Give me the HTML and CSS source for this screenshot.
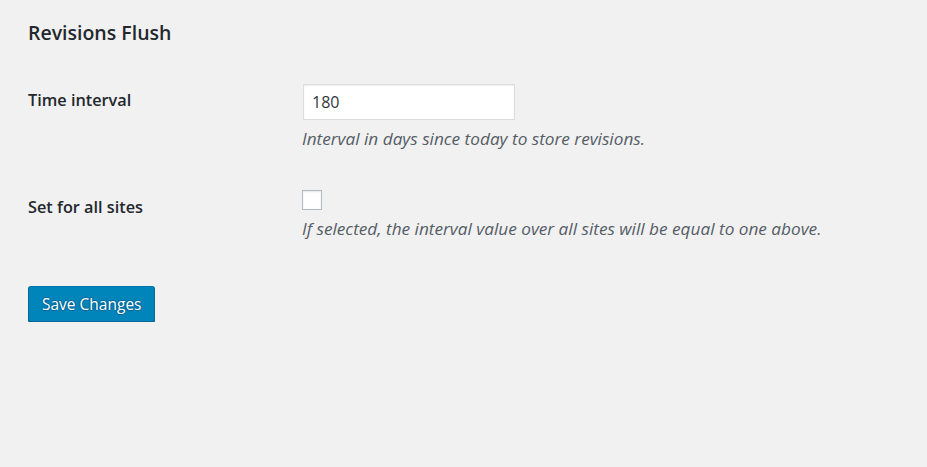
FILE: index.html
```html
<!DOCTYPE html>
<html>
<head>
<meta charset="utf-8">
<link rel="stylesheet" href="styles.css">
</head>
<body>
<div class="wrap">
  <h1 class="title">Revisions Flush</h1>
  <form class="form">
    <div class="row">
      <label class="label" for="interval">Time interval</label>
      <div class="field">
        <input class="text" id="interval" type="text" value="180">
        <p class="desc">Interval in days since today to store revisions.</p>
      </div>
    </div>
    <div class="row row-check">
      <label class="label" for="all">Set for all sites</label>
      <div class="field">
        <input class="check" id="all" type="checkbox">
        <p class="desc desc-check">If selected, the interval value over all sites will be equal to one above.</p>
      </div>
    </div>
    <div class="submit">
      <button class="button" type="button">Save Changes</button>
    </div>
  </form>
</div>
</body>
</html>
```

FILE: styles.css
```css
html, body {
  margin: 0;
  padding: 0;
  background: #f1f1f1;
  color: #23282d;
  font-family: "Open Sans", "Noto Sans", sans-serif;
  font-size: 14px;
}
.wrap {
  padding: 19px 0 0 28px;
}
.title {
  margin: 0;
  font-size: 19.5px;
  font-weight: 600;
  line-height: 27px;
  color: #23282d;
}
.form {
  margin-top: 38px;
}
.row {
  display: grid;
  grid-template-columns: 274px 1fr;
}
.label {
  font-weight: 600;
  font-size: 16.3px;
  line-height: 22px;
  padding-top: 5px;
}
.field {
  display: flex;
  flex-direction: column;
  align-items: flex-start;
}
.text {
  box-sizing: border-box;
  width: 212px;
  height: 36px;
  margin: 0 0 0 1px;
  padding: 0 8px;
  border: 1px solid #ddd;
  background: #fff;
  box-shadow: inset 0 1px 2px rgba(0,0,0,0.07);
  font-family: "Open Sans", "Noto Sans", sans-serif;
  font-size: 16px;
  color: #32373c;
  outline: none;
}
.desc {
  margin: 7px 0 0;
  font-style: italic;
  font-size: 17.2px;
  line-height: 24px;
  color: #555d66;
}
.row-check {
  margin-top: 39px;
}
.row-check .label {
  padding-top: 6px;
}
.check {
  -webkit-appearance: none;
  appearance: none;
  box-sizing: border-box;
  width: 20px;
  height: 20px;
  margin: 0;
  border: 1px solid #b4b9be;
  background: #fff;
  box-shadow: inset 0 1px 2px rgba(0,0,0,0.1);
}
.desc-check {
  margin-top: 7px;
}
.submit {
  margin-top: 45px;
}
.button {
  box-sizing: border-box;
  height: 36px;
  padding: 0 13px;
  border: 1px solid #0073aa;
  border-color: #0073aa #006799 #006799;
  border-radius: 3px;
  background: #0085ba;
  box-shadow: 0 1px 0 #006799;
  color: #fff;
  font-family: "Open Sans", "Noto Sans", sans-serif;
  font-size: 15.5px;
  text-shadow: 0 -1px 1px #006799, 1px 0 1px #006799, 0 1px 1px #006799, -1px 0 1px #006799;
}
```
